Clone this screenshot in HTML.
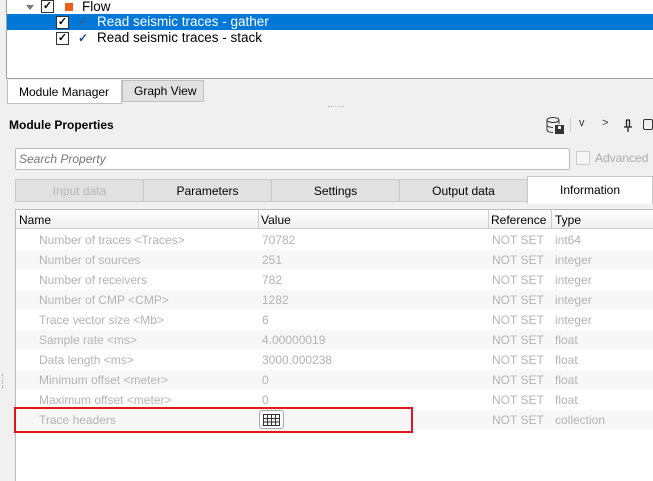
<!DOCTYPE html>
<html><head><style>
*{margin:0;padding:0;box-sizing:border-box}
body{width:653px;height:481px;background:#f0f0f0;font-family:"Liberation Sans",sans-serif;font-size:12px;color:#000;position:relative;overflow:hidden}
.abs{position:absolute}
.cb{position:absolute;width:13px;height:13px;border:1px solid #333;background:#fff;font-size:11px;line-height:11px;text-align:center;font-weight:bold}
.row{position:absolute;left:16px;width:637px;height:20px;color:#b4b4b4;line-height:20px}
.row span{position:absolute}
.tab{position:absolute;top:179px;height:23px;background:#e1e1e1;border:1px solid #c8c8c8;text-align:center;line-height:22px}
.tree{font-size:13.5px}
</style></head><body>
<!-- tree panel -->
<div class="abs" style="left:6px;top:0;width:647px;height:79px;background:#fff;border-left:1px solid #a0a0a0;border-bottom:1px solid #a0a0a0"></div>
<div class="abs" style="left:26px;top:5px;width:0;height:0;border-left:4px solid transparent;border-right:4px solid transparent;border-top:5px solid #777"></div>
<div class="cb" style="left:41px;top:0px">✓</div>
<div class="abs" style="left:65px;top:3px;width:8px;height:8px;background:#e8601c"></div>
<div class="abs tree" style="left:82px;top:-1px">Flow</div>
<div class="abs" style="left:7px;top:14px;width:646px;height:16px;background:#0078d7"></div>
<div class="cb" style="left:56px;top:16px">✓</div>
<div class="abs" style="left:78px;top:14px;color:#2a5f9a;font-weight:bold">✓</div>
<div class="abs tree" style="left:97px;top:14px;color:#fff">Read seismic traces - gather</div>
<div class="cb" style="left:56px;top:32px">✓</div>
<div class="abs" style="left:78px;top:31px;color:#1d4f8c;font-weight:bold">✓</div>
<div class="abs tree" style="left:97px;top:30px">Read seismic traces - stack</div>
<!-- bottom tabs -->
<div class="abs" style="left:7px;top:80px;width:115px;height:24px;background:#fff;border:1px solid #c0c0c0;border-top:none;line-height:24px;padding-left:11px">Module Manager</div>
<div class="abs" style="left:122px;top:80px;width:82px;height:22px;background:#e1e1e1;border:1px solid #c0c0c0;line-height:21px;padding-left:11px">Graph View</div>
<div class="abs" style="left:328px;top:106px;width:16px;border-top:1px dotted #bbb"></div>
<div class="abs" style="left:9px;top:118px;font-weight:bold;font-size:12px">Module Properties</div>
<!-- toolbar icons -->
<svg class="abs" style="left:546px;top:117px" width="20" height="18"><ellipse cx="7" cy="3" rx="6" ry="2.5" fill="none" stroke="#333"/><path d="M1 3v10c0 1.5 3 2.5 6 2.5M13 3v4M1 8c0 1.5 3 2.5 6 2.5" fill="none" stroke="#333"/><rect x="9" y="8" width="9" height="9" fill="#333"/><rect x="12" y="9" width="3" height="3" fill="#fff"/></svg>
<div class="abs" style="left:570px;top:118px;width:1px;height:14px;background:#ccc"></div>
<div class="abs" style="left:579px;top:117px;font-size:11px;color:#333">v</div>
<div class="abs" style="left:602px;top:117px;font-size:11px;color:#333">&gt;</div>
<svg class="abs" style="left:623px;top:119px" width="10" height="13"><path d="M3 1h4M3.5 1v7M6.5 1v7M1 8h8M5 8v5" stroke="#222" stroke-width="1.3" fill="none"/></svg>
<div class="abs" style="left:643px;top:119px;width:10px;height:11px;border:1px solid #333;border-radius:2px"></div>
<!-- search -->
<div class="abs" style="left:15px;top:148px;width:555px;height:22px;background:#fff;border:1px solid #bbb;border-radius:2px;font-style:italic;color:#777;line-height:20px;padding-left:3px">Search Property</div>
<div class="abs" style="left:576px;top:151px;width:14px;height:14px;border:1px solid #ccc;background:#f5f5f5"></div>
<div class="abs" style="left:595px;top:151px;color:#aaa">Advanced</div>
<!-- tabs -->
<div class="tab" style="left:15px;width:129px;color:#b5b5b5">Input data</div>
<div class="tab" style="left:143px;width:129px">Parameters</div>
<div class="tab" style="left:271px;width:129px">Settings</div>
<div class="tab" style="left:399px;width:129px">Output data</div>
<div class="abs" style="left:527px;top:176px;width:126px;height:28px;background:#fff;border:1px solid #c8c8c8;border-bottom:none;text-align:center;line-height:26px">Information</div>
<!-- table -->
<div class="abs" style="left:15px;top:209px;width:638px;height:272px;background:#fff;border:1px solid #bbb;border-right:none;border-bottom:none"></div>
<div class="abs" style="left:16px;top:210px;width:637px;height:19px;background:linear-gradient(#fff,#f0f0f0);border-bottom:1px solid #ccc"></div>
<div class="abs" style="left:258px;top:210px;width:1px;height:19px;background:#ccc"></div>
<div class="abs" style="left:488px;top:210px;width:1px;height:19px;background:#ccc"></div>
<div class="abs" style="left:551px;top:210px;width:1px;height:19px;background:#ccc"></div>
<div class="abs" style="left:19px;top:213px">Name</div>
<div class="abs" style="left:261px;top:213px">Value</div>
<div class="abs" style="left:491px;top:213px">Reference</div>
<div class="abs" style="left:555px;top:213px">Type</div>

<div class="row" style="top:230px"><span style="left:23px">Number of traces &lt;Traces&gt;</span><span style="left:246px">70782</span><span style="left:476px">NOT SET</span><span style="left:539px">int64</span></div>
<div class="row" style="top:250px;background:#f7f7f7"><span style="left:23px">Number of sources</span><span style="left:246px">251</span><span style="left:476px">NOT SET</span><span style="left:539px">integer</span></div>
<div class="row" style="top:270px"><span style="left:23px">Number of receivers</span><span style="left:246px">782</span><span style="left:476px">NOT SET</span><span style="left:539px">integer</span></div>
<div class="row" style="top:290px;background:#f7f7f7"><span style="left:23px">Number of CMP &lt;CMP&gt;</span><span style="left:246px">1282</span><span style="left:476px">NOT SET</span><span style="left:539px">integer</span></div>
<div class="row" style="top:310px"><span style="left:23px">Trace vector size &lt;Mb&gt;</span><span style="left:246px">6</span><span style="left:476px">NOT SET</span><span style="left:539px">integer</span></div>
<div class="row" style="top:330px;background:#f7f7f7"><span style="left:23px">Sample rate &lt;ms&gt;</span><span style="left:246px">4.00000019</span><span style="left:476px">NOT SET</span><span style="left:539px">float</span></div>
<div class="row" style="top:350px"><span style="left:23px">Data length &lt;ms&gt;</span><span style="left:246px">3000.000238</span><span style="left:476px">NOT SET</span><span style="left:539px">float</span></div>
<div class="row" style="top:370px;background:#f7f7f7"><span style="left:23px">Minimum offset &lt;meter&gt;</span><span style="left:246px">0</span><span style="left:476px">NOT SET</span><span style="left:539px">float</span></div>
<div class="row" style="top:390px"><span style="left:23px">Maximum offset &lt;meter&gt;</span><span style="left:246px">0</span><span style="left:476px">NOT SET</span><span style="left:539px">float</span></div>
<div class="row" style="top:410px;background:#f7f7f7"><span style="left:23px">Trace headers</span><span style="left:476px">NOT SET</span><span style="left:539px">collection</span></div>
<div class="abs" style="left:259px;top:410px;width:25px;height:19px;border:1px solid #aaa;border-radius:3px;background:#fafafa"></div>
<svg class="abs" style="left:263px;top:414px" width="17" height="12"><rect x="0.5" y="0.5" width="16" height="11" fill="none" stroke="#333"/><path d="M0 4.5h17M0 8h17M4.5 0v12M8.5 0v12M12.5 0v12" stroke="#333" fill="none"/></svg>
<div class="abs" style="left:14px;top:407px;width:399px;height:26px;border:2px solid #e0151f"></div>
<div class="abs" style="left:2px;top:374px;height:14px;border-left:1px dotted #aaa"></div>
</body></html>
